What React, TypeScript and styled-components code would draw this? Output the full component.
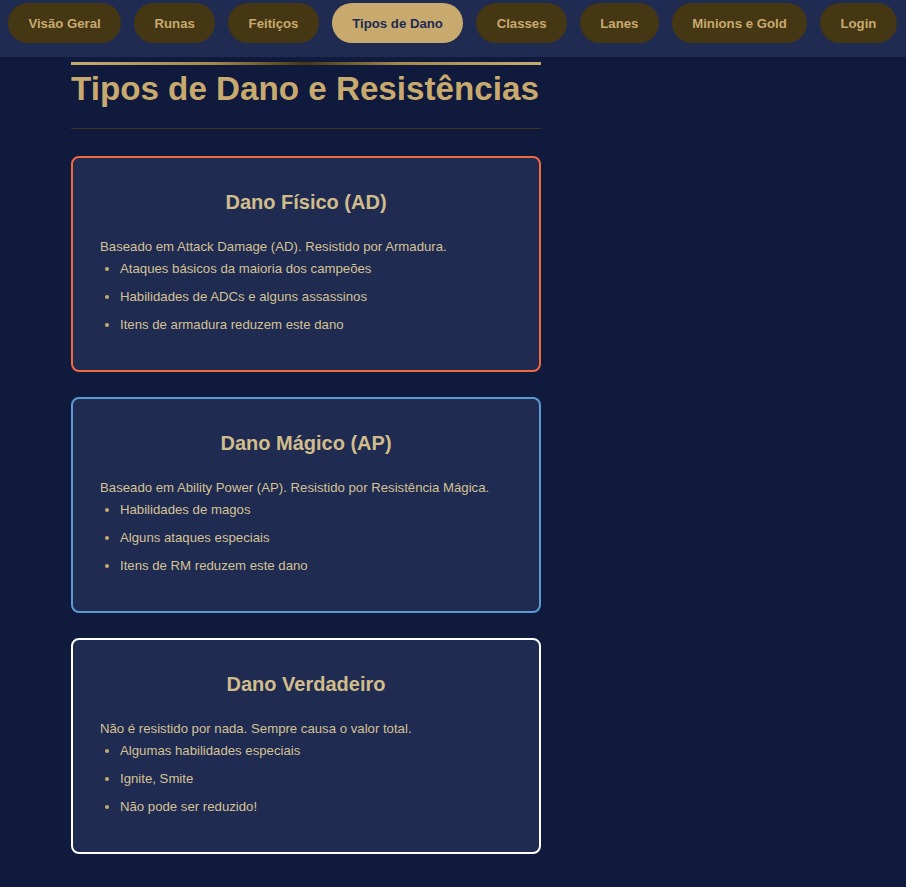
import React from "react";
import styled, { createGlobalStyle } from "styled-components";

const Global = createGlobalStyle`
  html, body {
    margin: 0;
    padding: 0;
    background: #0f1a3d;
    font-family: "Liberation Sans", Arial, sans-serif;
  }
`;

const Nav = styled.nav`
  display: flex;
  gap: 13px;
  padding: 3px 8px 14px;
  background: #1f2b50;
`;

const NavButton = styled.button<{ $active?: boolean }>`
  height: 40px;
  padding: 0 20.4px;
  border: none;
  border-radius: 20px;
  background: ${(p) => (p.$active ? "#c8aa6e" : "#463714")};
  color: ${(p) => (p.$active ? "#1e2a50" : "#c8aa6e")};
  font-family: "Liberation Sans", Arial, sans-serif;
  font-weight: 700;
  font-size: 13.2px;
  white-space: nowrap;
  cursor: pointer;
`;

const Main = styled.main`
  width: 470px;
  padding: 5px 0 30px 71px;
`;

const TitleBlock = styled.header`
  border-top: 3px solid transparent;
  border-image: linear-gradient(90deg, #c8aa6e 0%, #a68a4c 30%, #463714 50%, #a68a4c 70%, #c8aa6e 100%) 1;
  border-bottom: none;
`;

const Title = styled.h1`
  margin: 0;
  padding: 5px 0 20px;
  font-size: 33.2px;
  line-height: 38px;
  font-weight: 700;
  color: #c8aa6e;
  white-space: nowrap;
  border-bottom: 1px solid #3d3421;
`;

const Cards = styled.div`
  display: flex;
  flex-direction: column;
  gap: 25px;
  margin-top: 27px;
`;

const Card = styled.section<{ $accent: string }>`
  background: #1f2b50;
  border: 2px solid ${(p) => p.$accent};
  border-radius: 8px;
  padding: 33px 27px 31px 27px;
  color: #d4c297;
`;

const CardTitle = styled.h3`
  margin: 0 0 25px;
  text-align: center;
  font-size: 20px;
  line-height: 23px;
  font-weight: 700;
  color: #d1bd8c;
`;

const Lead = styled.p`
  margin: 0;
  font-size: 13.2px;
  line-height: 16px;
`;

const List = styled.ul`
  margin: 0;
  padding-left: 20px;
`;

const Item = styled.li`
  padding: 6px 0;
  font-size: 13.2px;
  line-height: 16px;
  &::marker {
    color: #c8aa6e;
  }
`;

const navItems = [
  "Visão Geral",
  "Runas",
  "Feitiços",
  "Tipos de Dano",
  "Classes",
  "Lanes",
  "Minions e Gold",
  "Login",
];

const cards = [
  {
    title: "Dano Físico (AD)",
    accent: "#f06a40",
    lead: "Baseado em Attack Damage (AD). Resistido por Armadura.",
    items: [
      "Ataques básicos da maioria dos campeões",
      "Habilidades de ADCs e alguns assassinos",
      "Itens de armadura reduzem este dano",
    ],
  },
  {
    title: "Dano Mágico (AP)",
    accent: "#5a9bd6",
    lead: "Baseado em Ability Power (AP). Resistido por Resistência Mágica.",
    items: [
      "Habilidades de magos",
      "Alguns ataques especiais",
      "Itens de RM reduzem este dano",
    ],
  },
  {
    title: "Dano Verdadeiro",
    accent: "#ffffff",
    lead: "Não é resistido por nada. Sempre causa o valor total.",
    items: ["Algumas habilidades especiais", "Ignite, Smite", "Não pode ser reduzido!"],
  },
];

export default function App() {
  return (
    <>
      <Global />
      <Nav>
        {navItems.map((n) => (
          <NavButton key={n} $active={n === "Tipos de Dano"}>
            {n}
          </NavButton>
        ))}
      </Nav>
      <Main>
        <TitleBlock>
          <Title>Tipos de Dano e Resistências</Title>
        </TitleBlock>
        <Cards>
          {cards.map((c) => (
            <Card key={c.title} $accent={c.accent}>
              <CardTitle>{c.title}</CardTitle>
              <Lead>{c.lead}</Lead>
              <List>
                {c.items.map((i) => (
                  <Item key={i}>{i}</Item>
                ))}
              </List>
            </Card>
          ))}
        </Cards>
      </Main>
    </>
  );
}
